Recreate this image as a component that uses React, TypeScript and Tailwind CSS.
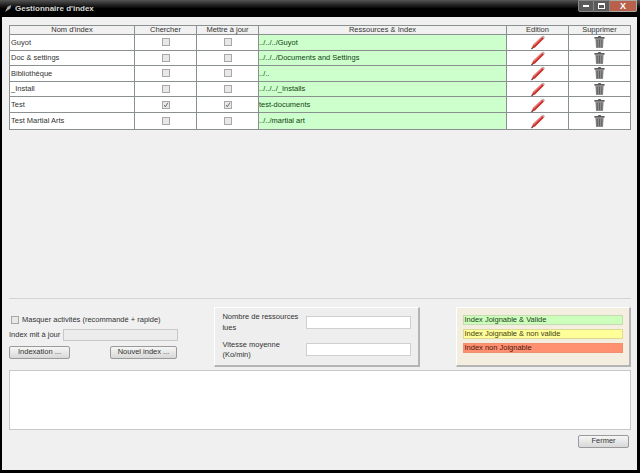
const rows = [
  { name: "Guyot", path: "../../../Guyot", checked: false },
  { name: "Doc & settings", path: "../../../Documents and Settings", checked: false },
  { name: "Bibliothèque", path: "../..", checked: false },
  { name: "_Install", path: "../../../_Installs", checked: false },
  { name: "Test", path: "test-documents", checked: true },
  { name: "Test Martial Arts", path: "../../martial art", checked: false },
];

const Check = ({ checked }: { checked: boolean }) => (
  <div className="w-[8px] h-[8px] border border-[#a8a8a8] bg-[#e8e8e8] flex items-center justify-center">
    {checked && (
      <svg viewBox="0 0 8 8" className="w-[8px] h-[8px]">
        <path d="M1.5 4 L3.2 6.5 L6.5 1" fill="none" stroke="#555" strokeWidth="1.1" />
      </svg>
    )}
  </div>
);

const Pencil = () => (
  <svg viewBox="0 0 16 16" className="w-[16px] h-[16px]">
    <path d="M1.5 15 L3 11 L12 2.5 L14 4.5 L5 13.5 Z" fill="#c8302c" />
    <path d="M3 11 L12 2.5 L12.8 3.3 L4 12 Z" fill="#e87a70" />
    <path d="M12 2.5 L13.2 1.4 L15 3.2 L14 4.5 Z" fill="#b8a8a8" />
    <path d="M1 15.5 L1.8 13.5 L3 14.6 Z" fill="#333" />
  </svg>
);

const Trash = () => (
  <svg viewBox="0 0 12 14" className="w-[11px] h-[14px]">
    <path d="M4.5 0.5 H7.5 V1.5 H11.5 V3.5 H0.5 V1.5 H4.5 Z" fill="#5c5c5c" />
    <path d="M1.5 3.5 H10.5 L9.8 13.5 H2.2 Z" fill="#8e8e8e" />
    <path d="M3.5 4.5 V12.5 M6 4.5 V12.5 M8.5 4.5 V12.5" stroke="#585858" strokeWidth="0.9" />
  </svg>
);

const Cell = ({ className, children }: { className?: string; children?: React.ReactNode }) => (
  <div className={`flex items-center border-r border-[#8a8f8f] ${className ?? ""}`}>{children}</div>
);

const Btn = ({ label, className }: { label: string; className: string }) => (
  <div className={`h-[13px] flex items-center justify-center border border-[#9a9a9a] rounded-[2px] bg-gradient-to-b from-[#f6f6f6] to-[#d8d8d8] ${className}`}>
    {label}
  </div>
);

export default function App() {
  return (
    <div className="w-[640px] h-[473px] flex flex-col overflow-hidden bg-black text-[7.5px] text-[#333] font-['Liberation_Sans',Arial,sans-serif]">
      {/* title bar */}
      <div className="h-[17px] shrink-0 flex items-center bg-gradient-to-b from-[#555] via-[#050505] to-black to-40% pl-[4px] pr-[3px]">
        <svg viewBox="0 0 10 10" className="w-[9px] h-[9px]">
          <path d="M1 9 L4 3 L8 1 L7 5 Z" fill="#aaa" />
        </svg>
        <span className="ml-[2px] text-[8px] font-bold text-[#d8d8d8]">Gestionnaire d'index</span>
        <div className="ml-auto flex h-[12px] -mt-[5px]">
          <div className="w-[16px] flex items-center justify-center bg-[#5a5a5a] border border-[#888] rounded-bl-[2px]">
            <div className="w-[6px] h-[2px] bg-white" />
          </div>
          <div className="w-[16px] flex items-center justify-center bg-[#5a5a5a] border-y border-r border-[#888]">
            <div className="w-[7px] h-[6px] border border-white border-t-2" />
          </div>
          <div className="w-[27px] flex items-center justify-center bg-[#b8604c] border-y border-r border-[#aaa] rounded-br-[2px] text-[9px] font-bold leading-none text-white">
            X
          </div>
        </div>
      </div>

      {/* window body */}
      <div className="flex-1 mb-[3px] ml-[2px] mr-[3px] bg-[#f0f0f0] flex flex-col pl-[7px] pr-[6px] pt-[8px]">
        {/* table */}
        <div className="w-[622px] border border-[#8a8f8f] bg-white">
          <div className="h-[9px] flex text-center bg-[#f1f1f1] border-b border-[#8a8f8f] [&>div]:justify-center">
            <Cell className="w-[125px]">Nom d'index</Cell>
            <Cell className="w-[62px]">Chercher</Cell>
            <Cell className="w-[62px]">Mettre à jour</Cell>
            <Cell className="w-[248px]">Ressources & Index</Cell>
            <Cell className="w-[62px]">Edition</Cell>
            <div className="flex-1 flex items-center">Supprimer</div>
          </div>
          {rows.map((r) => (
            <div key={r.name} className="h-[15.6px] flex border-b last:border-b-0 border-[#8a8f8f]">
              <Cell className="w-[125px] pl-[1px]">{r.name}</Cell>
              <Cell className="w-[62px] justify-center"><Check checked={r.checked} /></Cell>
              <Cell className="w-[62px] justify-center"><Check checked={r.checked} /></Cell>
              <Cell className="w-[248px] bg-[#ccffcc] text-[#114411]">{r.path}</Cell>
              <Cell className="w-[62px] justify-center"><Pencil /></Cell>
              <div className="flex-1 flex items-center justify-center"><Trash /></div>
            </div>
          ))}
        </div>

        {/* empty list area */}
        <div className="h-[169px] shrink-0 border-b border-[#d4d4d4]" />

        {/* panels */}
        <div className="h-[60px] mt-[8px] shrink-0 flex">
          <div className="w-[196px] flex flex-col">
            <div className="h-[12px] mt-[7px] ml-[2px] flex items-center gap-[3px]">
              <div className="w-[8px] h-[8px] border border-[#a8a8a8] bg-[#e8e8e8]" />
              <span>Masquer activités (recommandé + rapide)</span>
            </div>
            <div className="mt-[3px] flex items-center h-[12px]">
              <span className="w-[54px]">Index mit à jour</span>
              <div className="w-[115px] h-[12px] border border-[#c8c8c8] bg-[#ececec]" />
            </div>
            <div className="mt-[5px] flex">
              <Btn label="Indexation ..." className="w-[61px]" />
              <Btn label="Nouvel index ..." className="w-[67px] ml-[40px]" />
            </div>
          </div>

          <div className="w-[206px] ml-[10px] bg-[#eeeeee] border-t border-l border-white border-r-2 border-b-2 border-r-[#b4b4b4] border-b-[#b4b4b4] flex flex-col pl-[7px] pr-[7px]">
            <div className="mt-[8px] flex items-center h-[13px]">
              <span className="w-[84px]">Nombre de ressources lues</span>
              <div className="w-[107px] h-[13px] border border-[#cfcfcf] bg-white" />
            </div>
            <div className="mt-[11px] flex items-center">
              <span className="w-[84px] leading-[10px]">Vitesse moyenne (Ko/min)</span>
              <div className="w-[107px] h-[13px] border border-[#cfcfcf] bg-white" />
            </div>
          </div>

          <div className="w-[175px] ml-[36px] bg-[#f3eee0] border-t border-l border-white border-r-2 border-b-2 border-r-[#b4b4b4] border-b-[#b4b4b4] flex flex-col gap-[4px] pt-[7px] pl-[6px] pr-[6px]">
            <div className="h-[10px] flex items-center bg-[#ccffbb] border border-[#c4dcb0] text-[#1c3c1c]">Index Joignable & Valide</div>
            <div className="h-[10px] flex items-center bg-[#ffff99] border border-[#dcdc90] text-[#3c3c10]">Index Joignable & non valide</div>
            <div className="h-[10px] flex items-center bg-[#ff9070] border border-[#f09070] text-[#501810]">Index non Joignable</div>
          </div>
        </div>

        {/* log area */}
        <div className="h-[60px] w-[622px] mt-[3px] shrink-0 bg-white border border-[#c8c8c8]" />

        <div className="mt-[5px] flex justify-end pr-[2px]">
          <Btn label="Fermer" className="w-[51px]" />
        </div>
      </div>
    </div>
  );
}
